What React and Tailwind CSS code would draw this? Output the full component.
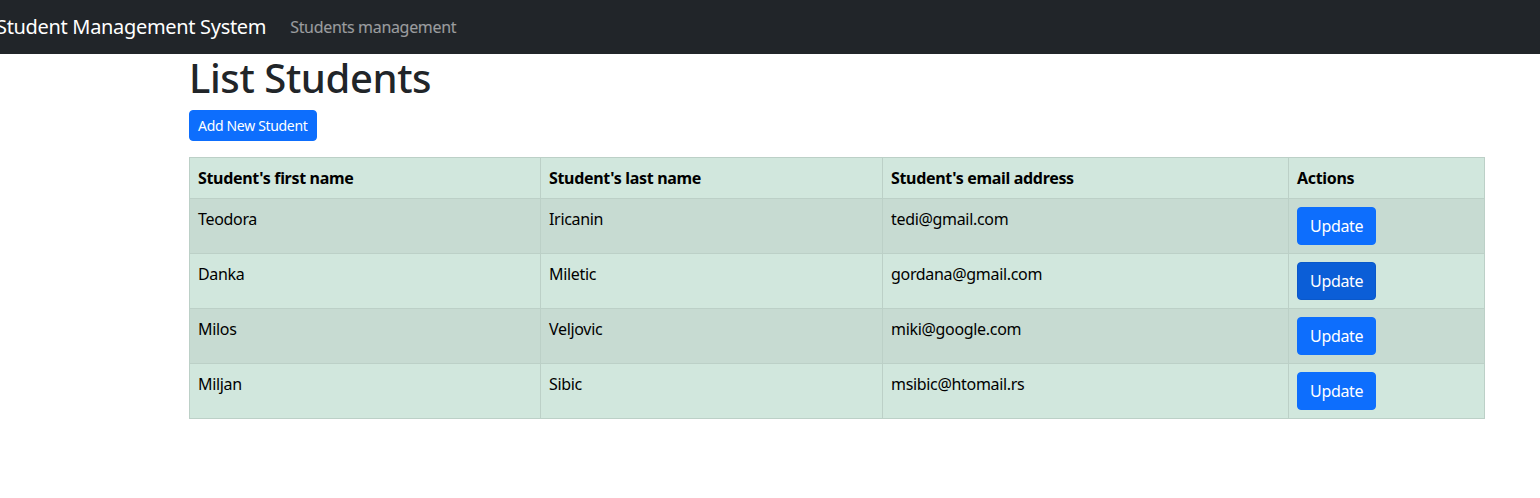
const students = [
  { first: 'Teodora', last: 'Iricanin', email: 'tedi@gmail.com' },
  { first: 'Danka', last: 'Miletic', email: 'gordana@gmail.com' },
  { first: 'Milos', last: 'Veljovic', email: 'miki@google.com' },
  { first: 'Miljan', last: 'Sibic', email: 'msibic@htomail.rs' },
];

export default function App() {
  return (
    <div className="min-h-[498px] bg-white font-['Noto_Sans',sans-serif] tracking-[-0.02em] text-[#212529]">
      <nav className="flex h-[54px] items-center bg-[#212529] overflow-hidden">
        <a className="ml-[-4px] mr-[24px] text-[20px] leading-[30px] text-white whitespace-nowrap">
          Student Management System
        </a>
        <a className="text-[16px] leading-[24px] text-white/55 whitespace-nowrap">Students management</a>
      </nav>

      <div className="ml-[189px] w-[1296px]">
        <h1 className="mb-[8px] text-[40px] font-medium leading-[48px] tracking-[-0.01em]">List Students</h1>
        <button className="mb-[16px] rounded-[4px] bg-[#0d6efd] px-[8px] py-[4px] text-[14px] leading-[21px] text-white border border-[#0d6efd]">
          Add New Student
        </button>

        <table className="w-full border-collapse text-[16px] leading-[24px] text-black">
          <thead>
            <tr className="bg-[#d1e7dd]">
              <th className="w-[351px] border border-[#bcd0c7] p-[8px] text-left font-bold">Student's first name</th>
              <th className="w-[342px] border border-[#bcd0c7] p-[8px] text-left font-bold">Student's last name</th>
              <th className="w-[406px] border border-[#bcd0c7] p-[8px] text-left font-bold">Student's email address</th>
              <th className="border border-[#bcd0c7] p-[8px] text-left font-bold">Actions</th>
            </tr>
          </thead>
          <tbody>
            {students.map((s, i) => (
              <tr key={s.email} className={i % 2 === 0 ? 'bg-[#c7dbd2]' : 'bg-[#d1e7dd]'}>
                <td className="border border-[#bcd0c7] p-[8px] align-top">{s.first}</td>
                <td className="border border-[#bcd0c7] p-[8px] align-top">{s.last}</td>
                <td className="border border-[#bcd0c7] p-[8px] align-top">{s.email}</td>
                <td className="border border-[#bcd0c7] p-[8px] align-top">
                  <button
                    className={
                      'block rounded-[4px] px-[12px] py-[6px] text-[16px] leading-[24px] text-white border ' +
                      (i === 1 ? 'bg-[#0b5ed7] border-[#0a58ca]' : 'bg-[#0d6efd] border-[#0d6efd]')
                    }
                  >
                    Update
                  </button>
                </td>
              </tr>
            ))}
          </tbody>
        </table>
      </div>
    </div>
  );
}
